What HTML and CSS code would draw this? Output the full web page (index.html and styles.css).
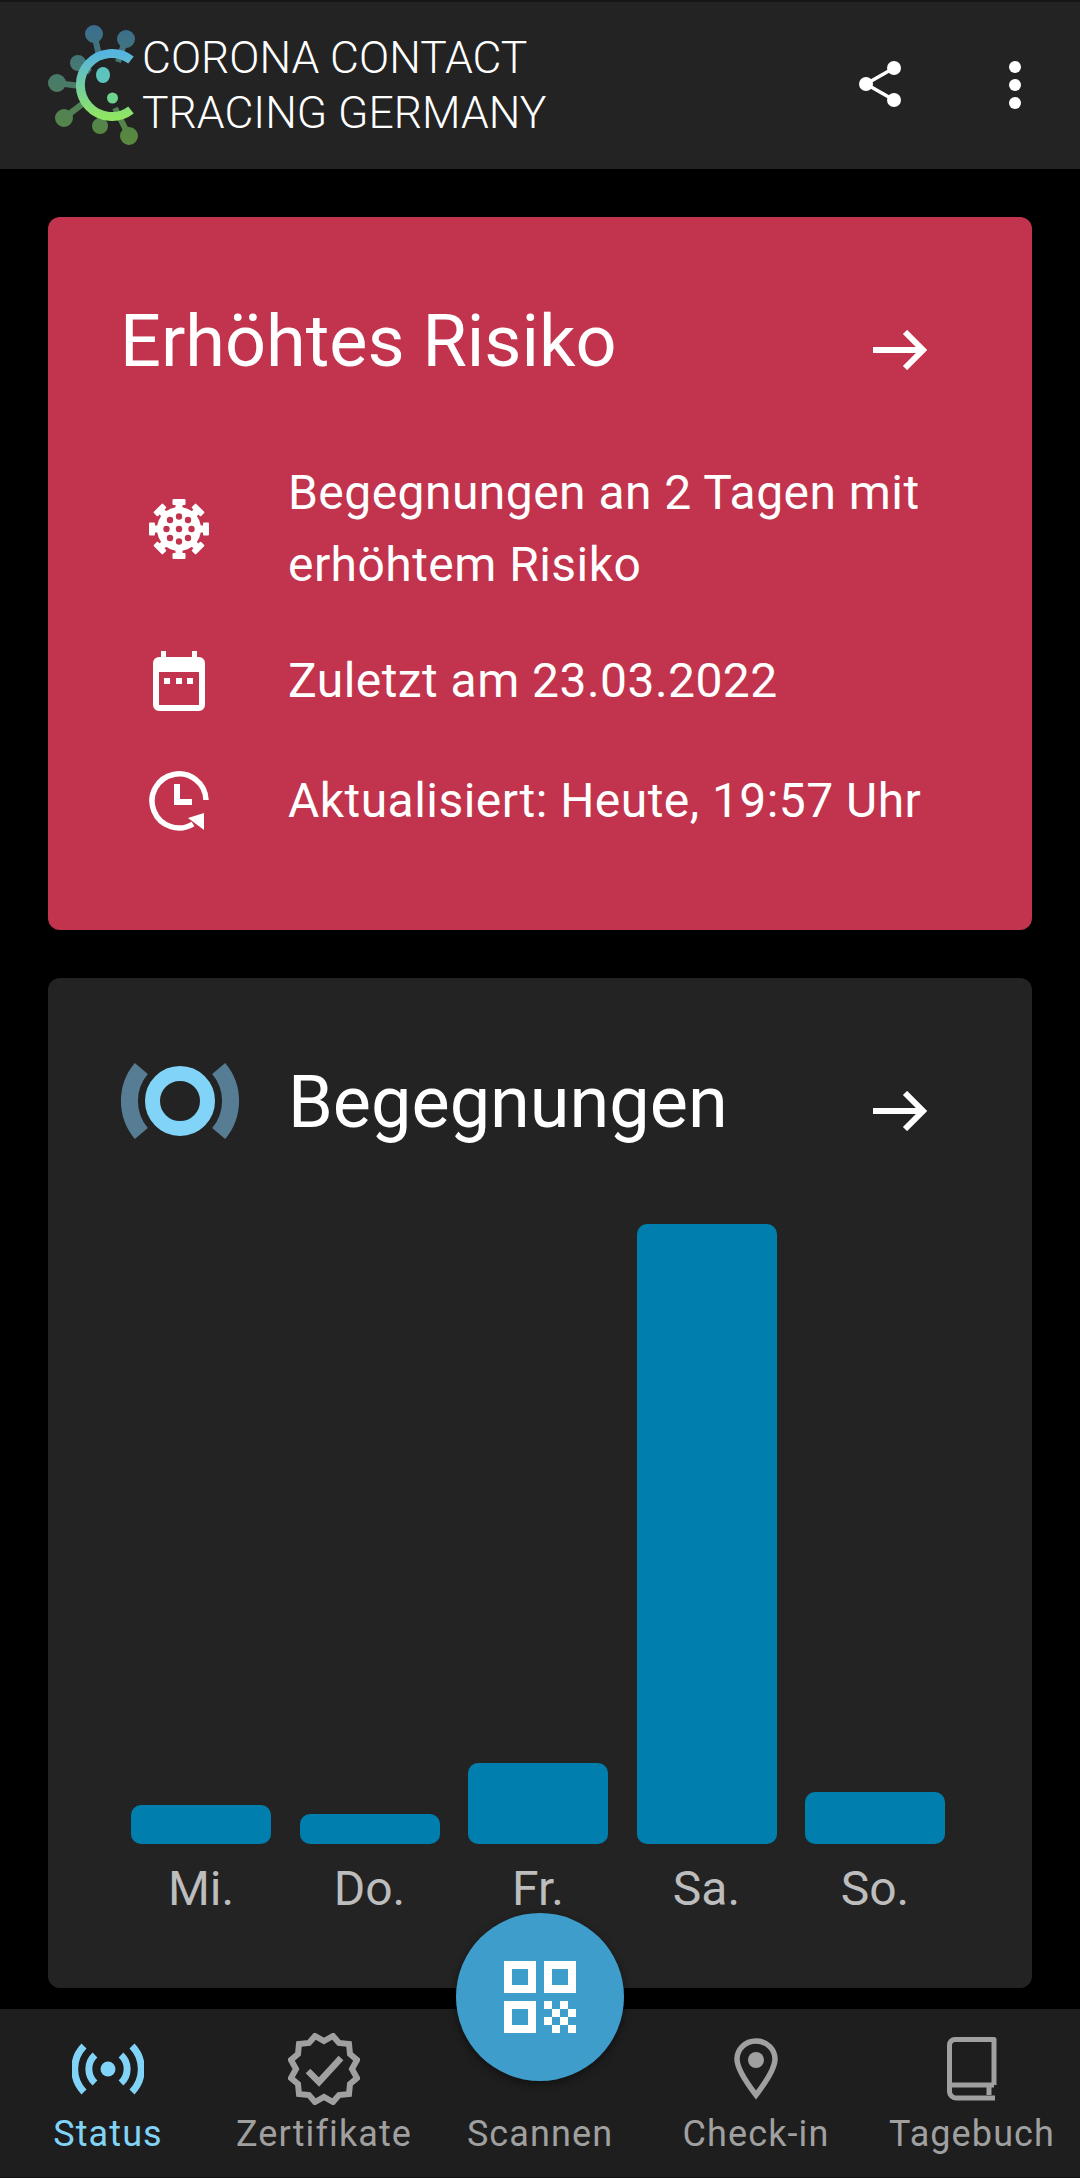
FILE: index.html
```html
<!DOCTYPE html>
<html lang="de">
<head>
<meta charset="utf-8">
<title>Corona Contact Tracing Germany</title>
<link rel="stylesheet" href="styles.css">
</head>
<body>
<div class="app">
  <header class="toolbar">
    <svg class="logo" viewBox="48 20 96 130" width="96" height="130">
      <defs>
        <linearGradient id="cg" x1="0" y1="0" x2="0" y2="1"><stop offset="0" stop-color="#55b4e0"/><stop offset="1" stop-color="#8fe564"/></linearGradient>
        <linearGradient id="vg" gradientUnits="userSpaceOnUse" x1="0" y1="25" x2="0" y2="146"><stop offset="0" stop-color="#3b6e90"/><stop offset="1" stop-color="#5a8a3a"/></linearGradient>
      </defs>
      <g stroke="url(#vg)" stroke-width="6" fill="url(#vg)">
        <path d="M94 33 L100 60M126 38 L118 62M78 63 L90 72M57 83 L80 86M64 118 L85 102M100 127 L100 112M129 136 L115 108" fill="none"/>
        <circle cx="94" cy="34" r="6"/><circle cx="126" cy="39" r="6"/><circle cx="78" cy="63" r="5"/><circle cx="57" cy="83" r="6"/><circle cx="64" cy="118" r="6"/><circle cx="100" cy="126" r="5"/><circle cx="129" cy="136" r="6"/>
      </g>
      <path d="M131 60 A31.500 31.500 0 1 0 131 110" fill="none" stroke="url(#cg)" stroke-width="9"/>
      <ellipse cx="103" cy="75" rx="7" ry="8" fill="#5cc4bd"/>
      <circle cx="112.500" cy="98" r="5.500" fill="#6fd48f"/>
    </svg>
    <div class="app-name">CORONA CONTACT<br>TRACING GERMANY</div>
    <svg class="share" width="44" height="50" viewBox="0 0 44 50"><g fill="#fff" stroke="none"><circle cx="35" cy="9" r="7"/><circle cx="7" cy="25" r="7"/><circle cx="35" cy="41" r="7"/></g><path d="M35 9 L7 25 L35 41" stroke="#fff" stroke-width="3.500" fill="none"/></svg>
    <svg class="more" width="14" height="50" viewBox="0 0 14 50"><g fill="#fff"><circle cx="7" cy="7" r="6"/><circle cx="7" cy="25" r="6"/><circle cx="7" cy="43" r="6"/></g></svg>
  </header>

  <main class="content">
    <section class="card risk">
      <div class="card-head">
        <h1 class="card-title">Erhöhtes Risiko</h1>
        <svg class="arrow" width="56" height="40" viewBox="0 0 56 40"><path d="M1 20 H52 M33 2 L51 20 L33 38" fill="none" stroke="#fff" stroke-width="6"/></svg>
      </div>
      <div class="risk-row first">
        <span class="risk-icon">
          <svg width="62" height="62" viewBox="-31 -31 62 62">
            <defs><g id="spike"><rect x="-3.500" y="-28" width="7" height="10" fill="#fff"/><rect x="-6.500" y="-30" width="13" height="6" rx="1" fill="#fff"/></g></defs>
            <use href="#spike"/><use href="#spike" transform="rotate(45)"/><use href="#spike" transform="rotate(90)"/><use href="#spike" transform="rotate(135)"/><use href="#spike" transform="rotate(180)"/><use href="#spike" transform="rotate(225)"/><use href="#spike" transform="rotate(270)"/><use href="#spike" transform="rotate(315)"/>
            <circle r="22" fill="#fff"/>
            <g fill="#c2334d"><circle r="3.200"/><circle cy="-12.500" r="3.200"/><circle cy="12.500" r="3.200"/><circle cx="-12.500" r="3.200"/><circle cx="12.500" r="3.200"/><circle cx="-9" cy="-9" r="3.200"/><circle cx="9" cy="-9" r="3.200"/><circle cx="-9" cy="9" r="3.200"/><circle cx="9" cy="9" r="3.200"/></g>
          </svg>
        </span>
        <p class="risk-text">Begegnungen an 2 Tagen mit<br>erhöhtem Risiko</p>
      </div>
      <div class="risk-row second">
        <span class="risk-icon">
          <svg width="52" height="60" viewBox="0 0 52 60">
            <path d="M8 0h5v6h26V0h5v6h2a6 6 0 0 1 6 6v42a6 6 0 0 1-6 6H6a6 6 0 0 1-6-6V12a6 6 0 0 1 6-6h2z" fill="#fff"/>
            <rect x="6" y="21" width="40" height="33" fill="#c2334d"/>
            <g fill="#fff"><rect x="11" y="27" width="6" height="6"/><rect x="23" y="27" width="6" height="6"/><rect x="34" y="27" width="6" height="6"/></g>
          </svg>
        </span>
        <p class="risk-text">Zuletzt am 23.03.2022</p>
      </div>
      <div class="risk-row third">
        <span class="risk-icon">
          <svg width="62" height="62" viewBox="0 0 62 62">
            <path d="M58 30 A27 27 0 1 0 45 54" fill="none" stroke="#fff" stroke-width="5.500"/>
            <path d="M56 43 V60 L40 48 Z" fill="#fff"/>
            <path d="M29 14 V32 H44" fill="none" stroke="#fff" stroke-width="6"/>
          </svg>
        </span>
        <p class="risk-text">Aktualisiert: Heute, 19:57 Uhr</p>
      </div>
    </section>

    <section class="card encounters">
      <div class="enc-head">
        <svg class="enc-icon" width="120" height="90" viewBox="-60 -45 120 90">
          <path d="M-38.700 -32.500 A50.500 50.500 0 0 0 -38.700 32.500 M38.700 -32.500 A50.500 50.500 0 0 1 38.700 32.500" fill="none" stroke="#567d93" stroke-width="17"/>
          <circle r="27.500" fill="none" stroke="#81d4f7" stroke-width="15"/>
        </svg>
        <h2 class="card-title">Begegnungen</h2>
        <svg class="arrow" width="56" height="40" viewBox="0 0 56 40"><path d="M1 20 H52 M33 2 L51 20 L33 38" fill="none" stroke="#fff" stroke-width="6"/></svg>
      </div>
      <div class="chart">
        <div class="col"><div class="bar" style="height:39px"></div><span class="day">Mi.</span></div>
        <div class="col"><div class="bar" style="height:30px"></div><span class="day">Do.</span></div>
        <div class="col"><div class="bar" style="height:81px"></div><span class="day">Fr.</span></div>
        <div class="col"><div class="bar" style="height:620px"></div><span class="day">Sa.</span></div>
        <div class="col"><div class="bar" style="height:52px"></div><span class="day">So.</span></div>
      </div>
    </section>
  </main>

  <nav class="bottom-nav">
    <a class="tab active">
      <svg width="72" height="52" viewBox="-36 -26 72 52" fill="none" stroke="#81d4f7" stroke-width="7"><circle r="7.500" fill="#81d4f7" stroke="none"/><path d="M-13 -14 A19 19 0 0 0 -13 14 M13 -14 A19 19 0 0 1 13 14"/><path d="M-24 -23 A33 33 0 0 0 -24 23 M24 -23 A33 33 0 0 1 24 23"/></svg>
      <span>Status</span>
    </a>
    <a class="tab">
      <svg width="72" height="72" viewBox="-36 -36 72 72" fill="none" stroke="#a0a0a0" stroke-width="6"><path d="M0 -28 L9 -33 L15 -26 L25 -25 L26 -15 L33 -9 L28 0 L33 9 L26 15 L25 25 L15 26 L9 33 L0 28 L-9 33 L-15 26 L-25 25 L-26 15 L-33 9 L-28 0 L-33 -9 L-26 -15 L-25 -25 L-15 -26 L-9 -33 Z" stroke-linejoin="miter"/><path d="M-16 2 L-5 13 L17 -11" stroke-width="6.500"/></svg>
      <span>Zertifikate</span>
    </a>
    <div class="tab scan-tab"><span>Scannen</span></div>
    <a class="tab">
      <svg width="44" height="62" viewBox="0 0 44 62" fill="none"><path d="M22 3 C10.500 3 3 12 3 21 C3 31 12 44 22 57 C32 44 41 31 41 21 C41 12 33.500 3 22 3 Z" stroke="#a0a0a0" stroke-width="5.500"/><circle cx="22" cy="22" r="8" fill="#a0a0a0"/></svg>
      <span>Check-in</span>
    </a>
    <a class="tab">
      <svg width="50" height="64" viewBox="0 0 50 64" fill="none" stroke="#a0a0a0" stroke-width="5"><path d="M8 2.500 H47 V48 M3 48 H47 M2.500 8 A5.500 5.500 0 0 1 8 2.500 M2.500 8 V54.500 A6.500 6.500 0 0 0 9 61 H48 M42 50 V58" stroke-linejoin="round"/></svg>
      <span>Tagebuch</span>
    </a>
    <button class="fab" aria-label="Scannen">
      <svg width="72" height="72" viewBox="0 0 72 72">
        <g fill="none" stroke="#fff" stroke-width="8"><rect x="4" y="4" width="24" height="24"/><rect x="44" y="4" width="24" height="24"/><rect x="4" y="44" width="24" height="24"/></g>
        <g fill="#fff"><rect x="40" y="40" width="8" height="8"/><rect x="56" y="40" width="8" height="8"/><rect x="48" y="48" width="8" height="8"/><rect x="64" y="48" width="8" height="8"/><rect x="40" y="56" width="8" height="8"/><rect x="56" y="56" width="8" height="8"/><rect x="48" y="64" width="8" height="8"/><rect x="64" y="64" width="8" height="8"/></g>
      </svg>
    </button>
  </nav>
</div>
</body>
</html>
```
FILE: styles.css
```css
* { box-sizing: border-box; }
html, body { margin: 0; padding: 0; }
body { background: #000; font-family: Roboto, "Liberation Sans", sans-serif; color: #fff; }
.app { width: 1080px; height: 2178px; display: flex; flex-direction: column; overflow: hidden; }

.toolbar { height: 169px; flex: none; background: #232323; border-top: 2px solid #161616; display: flex; align-items: center; padding-left: 48px; position: relative; }
.logo { flex: none; display: block; margin-top: -2px; }
.app-name { font-weight: 300; font-size: 44.500px; line-height: 55px; margin-left: -2px; color: #fff; white-space: nowrap; flex: 1; padding-top: 1px; }
.share { flex: none; margin-right: 105px; margin-top: -4px; }
.more { flex: none; margin-right: 58px; margin-top: -2px; }

.content { flex: 1; padding: 48px 48px 0; display: flex; flex-direction: column; gap: 48px; min-height: 0; }
.card { background: #232323; border-radius: 12px; flex: none; }
.risk { background: #c2334d; height: 713px; padding: 85px 0 0 72px; }
.card-head { display: flex; align-items: center; height: 80px; }
.card-title { margin: 0; flex: 1; font-weight: 400; font-size: 72px; line-height: 80px; color: #fff; }
.arrow { flex: none; margin-right: 104px; margin-top: 16px; }

.risk-row { display: flex; align-items: center; }
.risk-row.first { margin-top: 75px; }
.risk-row.second { margin-top: 44px; }
.risk-row.third { margin-top: 48px; }
.risk-icon { width: 114px; flex: none; display: flex; justify-content: center; margin-left: 2px; }
.risk-icon svg { display: block; }
.risk-text { margin: 0 0 0 52px; font-size: 48px; letter-spacing: 0.450px; line-height: 72px; color: #fff; }

.encounters { height: 1010px; padding: 72px 0 0 0; }
.enc-head { display: flex; align-items: center; height: 106px; padding-left: 72px; }
.enc-icon { flex: none; margin-right: 48px; margin-top: -4px; }
.chart { display: grid; grid-template-columns: repeat(5, 140px); column-gap: 28.500px; margin: 53px 0 0 83px; height: 710px; align-items: end; }
.col { display: flex; flex-direction: column; align-items: center; }
.bar { width: 100%; background: #007faf; border-radius: 10px; }
.day { font-size: 48px; line-height: 60px; margin-top: 15px; color: #bdbdbd; }

.bottom-nav { height: 169px; flex: none; background: #1e1e1e; display: grid; grid-template-columns: repeat(5, 216px); position: relative; margin-top: 22px; border-bottom: 1px solid #111; }
.tab { position: relative; display: flex; flex-direction: column; align-items: center; justify-content: flex-end; height: 168px; padding-bottom: 21px; color: #a0a0a0; font-size: 36px; line-height: 44px; letter-spacing: 1.100px; }
.tab svg { display: block; position: absolute; top: 60px; left: 50%; transform: translate(-50%, -50%); }
.tab.active { color: #81d4f7; }
.fab { position: absolute; left: 456px; top: -96px; width: 168px; height: 168px; border: 0; padding: 0; border-radius: 50%; background: #3f9dcc; box-shadow: 0 3px 8px rgba(0,0,0,.45); display: flex; align-items: center; justify-content: center; }
.fab svg { display: block; }
```
